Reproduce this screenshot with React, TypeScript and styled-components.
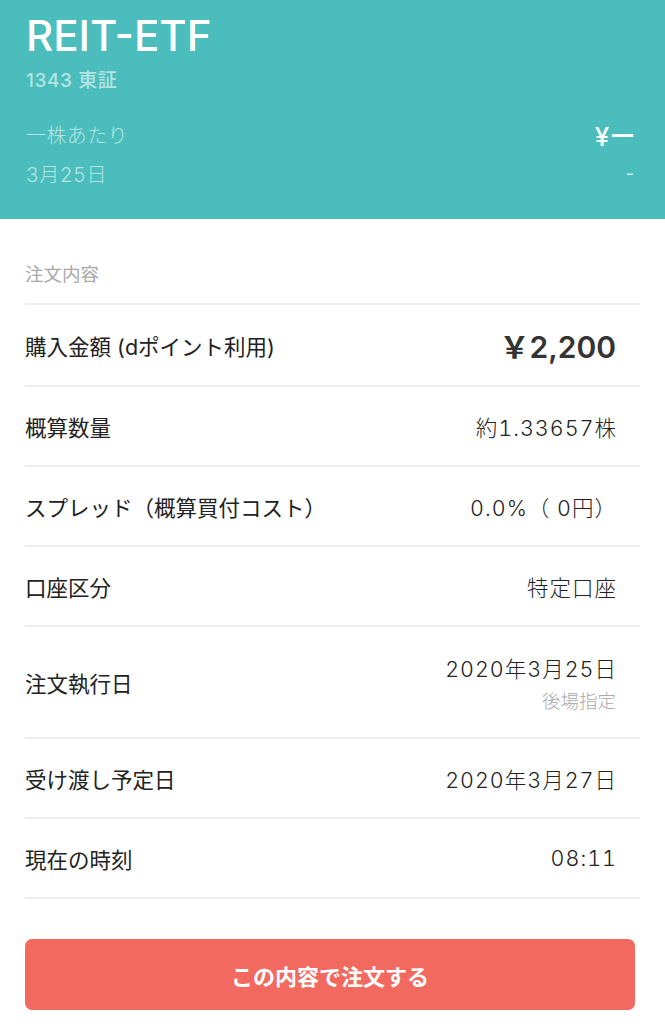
import styled, { createGlobalStyle } from 'styled-components';

const sans = `Inter, "Noto Sans CJK JP", "Noto Sans", sans-serif`;

const GlobalStyle = createGlobalStyle`
  html, body {
    margin: 0;
    padding: 0;
    background: #ffffff;
  }
  body {
    font-family: ${sans};
    color: #222;
  }
`;

const Header = styled.header`
  background: #4bbdbd;
  height: 219px;
  box-sizing: border-box;
  padding: 14px 29px 0 26px;
  display: flex;
  flex-direction: column;
`;

const Title = styled.h1`
  margin: 0;
  font-family: ${sans};
  font-weight: 500;
  font-size: 42px;
  line-height: 44px;
  color: #ffffff;
`;

const Code = styled.div`
  margin-top: 11px;
  font-weight: 500;
  font-size: 19px;
  line-height: 24px;
  letter-spacing: 0.6px;
  color: #b4e4e2;
`;

const PriceRow = styled.div<{ $top: number }>`
  display: flex;
  justify-content: space-between;
  align-items: center;
  margin-top: ${p => p.$top}px;
  height: 28px;
  color: #b4e4e2;
  font-size: 20px;
  font-weight: 300;
  letter-spacing: 0.4px;
  font-variant-numeric: tabular-nums;
`;

const PriceValue = styled.span<{ $big?: boolean }>`
  color: #ffffff;
  font-size: ${p => (p.$big ? '26px' : '18px')};
  font-weight: ${p => (p.$big ? 500 : 400)};
  opacity: ${p => (p.$big ? 1 : 0.75)};
`;

const Body = styled.main`
  padding: 0 25px;
`;

const SectionLabel = styled.div`
  padding: 41px 0 14px;
  font-size: 18.5px;
  line-height: 29px;
  color: #a8a8a8;
  border-bottom: 2px solid #efefef;
`;

const Row = styled.div<{ $h?: number }>`
  display: flex;
  justify-content: space-between;
  align-items: center;
  min-height: ${p => p.$h ?? 78}px;
  padding: 0 23px 0 0;
  border-bottom: 2px solid #efefef;
`;

const Label = styled.span`
  font-size: 21.5px;
  color: #222;
`;

const Value = styled.div`
  display: flex;
  flex-direction: column;
  align-items: flex-end;
  font-size: 21.5px;
  font-weight: 300;
  letter-spacing: 1px;
  font-variant-numeric: tabular-nums;
  color: #222;
`;

const Amount = styled.span`
  font-size: 30px;
  font-weight: 600;
  margin-right: 1px;
  color: #333;
`;

const Sub = styled.span`
  font-size: 18.5px;
  letter-spacing: 0;
  color: #a8a8a8;
  margin: 4px 1px 0 0;
`;

const Footer = styled.div`
  padding: 40px 30px 0 25px;
`;

const OrderButton = styled.button`
  width: 100%;
  height: 71px;
  border: none;
  border-radius: 7px;
  background: #f26a5f;
  color: #ffffff;
  font-family: "Noto Sans CJK JP", sans-serif;
  font-size: 22px;
  font-weight: 700;
`;

const rows: { label: string; value: string }[] = [
  { label: '概算数量', value: '約1.33657株' },
  { label: 'スプレッド（概算買付コスト）', value: '0.0%（ 0円）' },
  { label: '口座区分', value: '特定口座' },
];

export default function App() {
  return (
    <>
      <GlobalStyle />
      <Header>
        <Title>REIT-ETF</Title>
        <Code>1343 東証</Code>
        <PriceRow $top={27}>
          <span>一株あたり</span>
          <PriceValue $big>¥ー</PriceValue>
        </PriceRow>
        <PriceRow $top={11}>
          <span>3月25日</span>
          <PriceValue>-</PriceValue>
        </PriceRow>
      </Header>
      <Body>
        <SectionLabel>注文内容</SectionLabel>
        <Row $h={80}>
          <Label>購入金額 (dポイント利用)</Label>
          <Amount>￥2,200</Amount>
        </Row>
        {rows.map(r => (
          <Row key={r.label}>
            <Label>{r.label}</Label>
            <Value>{r.value}</Value>
          </Row>
        ))}
        <Row $h={110}>
          <Label>注文執行日</Label>
          <Value>
            <span>2020年3月25日</span>
            <Sub>後場指定</Sub>
          </Value>
        </Row>
        <Row>
          <Label>受け渡し予定日</Label>
          <Value>2020年3月27日</Value>
        </Row>
        <Row>
          <Label>現在の時刻</Label>
          <Value>08:11</Value>
        </Row>
      </Body>
      <Footer>
        <OrderButton>この内容で注文する</OrderButton>
      </Footer>
    </>
  );
}
